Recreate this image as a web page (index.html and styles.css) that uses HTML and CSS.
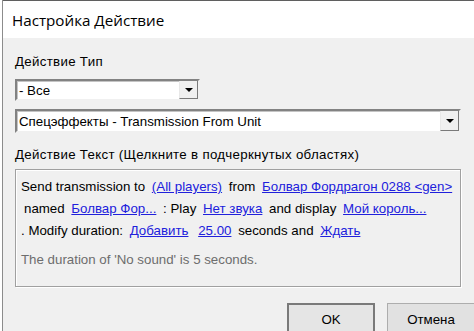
FILE: index.html
```html
<!DOCTYPE html>
<html lang="ru">
<head>
    <meta charset="UTF-8">
    <title>Настройка Действие</title>
    <link rel="stylesheet" href="styles.css">
</head>
<body>
    <div class="screen">
        <div class="behind"></div>

        <div class="dialog">
            <div class="titlebar">Настройка Действие</div>

            <div class="content">
                <div class="label">Действие Тип</div>
                <div class="select select-small">
                    <span class="value">- Все</span>
                    <span class="arrow"></span>
                </div>

                <div class="select select-wide">
                    <span class="value">Спецэффекты - Transmission From Unit</span>
                    <span class="arrow"></span>
                </div>

                <div class="label label-text">Действие Текст (Щелкните в подчеркнутых областях)</div>

                <div class="group">
                    <div class="line">Send transmission to <a href="#">(All players)</a> from <a href="#">Болвар Фордрагон 0288 &lt;gen&gt;</a></div>
                    <div class="line indent">named <a href="#">Болвар Фор...</a> : Play <a href="#">Нет звука</a> and display <a href="#">Мой король...</a></div>
                    <div class="line">. Modify duration: <a href="#">Добавить</a> <a href="#">25.00</a> seconds and <a href="#">Ждать</a></div>
                    <div class="note">The duration of 'No sound' is 5 seconds.</div>
                </div>

                <div class="buttons">
                    <button class="btn btn-default">OK</button>
                    <button class="btn">Отмена</button>
                </div>
            </div>
        </div>
    </div>
</body>
</html>
```

FILE: styles.css
```css
* {
    margin: 0;
    padding: 0;
    box-sizing: border-box;
}

body {
    width: 474px;
    height: 331px;
    overflow: hidden;
    font-family: "Liberation Sans", Arial, sans-serif;
    font-size: 13.3px;
    color: #000;
    background: #f0f0f0;
}

.screen {
    display: flex;
    height: 331px;
}

.behind {
    width: 3px;
    background: #fff;
    border-right: 1px solid #8c8c8c;
}

.dialog {
    flex: 1;
    display: flex;
    flex-direction: column;
    border-top: 1px solid #5f5f5f;
}

.titlebar {
    height: 37px;
    flex-shrink: 0;
    background: #fff;
    padding: 9px 0 0 9px;
    font-family: "Open Sans", "Liberation Sans", sans-serif;
    font-size: 15.2px;
}

.content {
    flex: 1;
    background: #f0f0f0;
    padding: 16px 12px 0 12px;
}

.label {
    height: 15px;
    line-height: 15px;
    margin-bottom: 10px;
    letter-spacing: 0.3px;
}

.label-text {
    margin: 14px 0 7px 0;
}

.select {
    display: flex;
    align-items: center;
    background: #fff;
    border: 2px solid;
    border-color: #828282 #f0f0f0 #f0f0f0 #828282;
    box-shadow: inset 1px 1px 0 #c4c4c4;
}

.select-small {
    width: 185px;
    height: 22px;
    margin-bottom: 8px;
}

.select-wide {
    width: 446px;
    height: 24px;
}

.select .value {
    flex: 1;
    padding-left: 2px;
    white-space: nowrap;
}

.select .arrow {
    width: 19px;
    height: 100%;
    background: #f0f0f0;
    border-left: 1px solid #e8e8e8;
    border-right: 1px solid #7a7a7a;
    border-bottom: 1px solid #7a7a7a;
    position: relative;
}

.select .arrow::after {
    content: "";
    position: absolute;
    left: 5px;
    top: 50%;
    margin-top: -2px;
    border-left: 4px solid transparent;
    border-right: 4px solid transparent;
    border-top: 4px solid #000;
}

.group {
    width: 446px;
    height: 118px;
    border: 1px solid #a0a0a0;
    box-shadow: inset 1px 1px 0 #fff, 1px 1px 0 #fff;
    padding: 6px 0 0 5px;
}

.line {
    line-height: 22px;
    white-space: nowrap;
}

.line.indent {
    padding-left: 3px;
}

.line a {
    color: #2020dc;
    text-decoration: underline;
    margin: 0 3px;
}

.note {
    margin-top: 7px;
    line-height: 22px;
    color: #6d6d6d;
}

.buttons {
    display: flex;
    justify-content: flex-end;
    gap: 12px;
    margin-top: 16px;
    margin-right: -13px;
}

.btn {
    width: 88px;
    height: 32px;
    font-family: "Liberation Sans", Arial, sans-serif;
    font-size: 13.3px;
    background: #e1e1e1;
    border: 1px solid #adadad;
}

.btn-default {
    border: 2px solid #7a7a7a;
    background: #e5e5e5;
}
```
